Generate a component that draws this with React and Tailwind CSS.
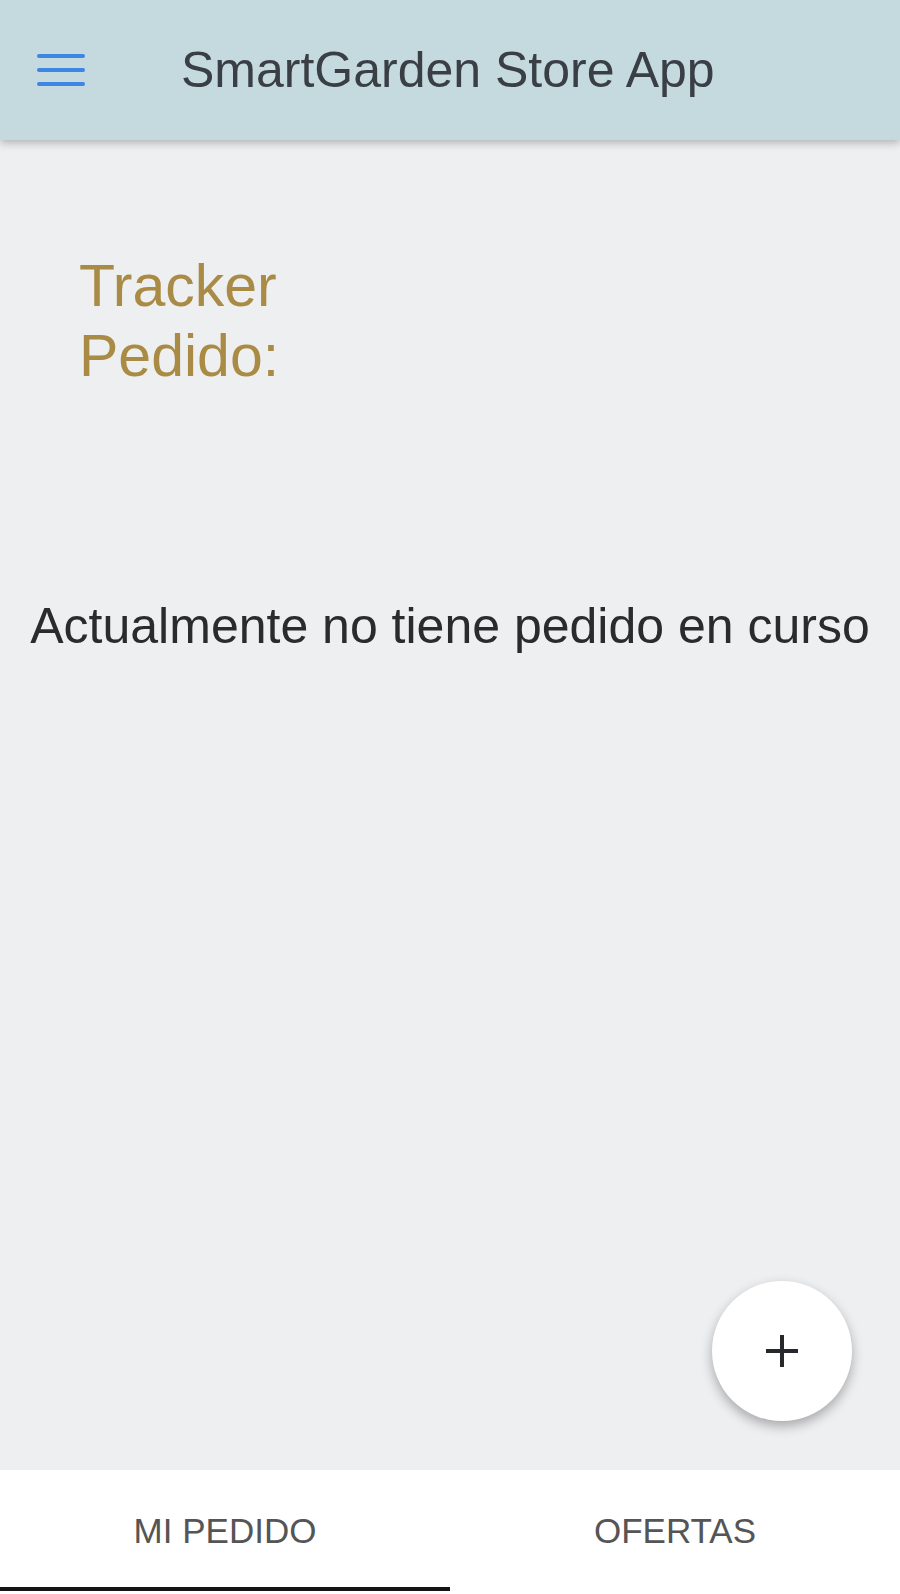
export default function App() {
  return (
    <div className="flex flex-col h-[1594px] w-full bg-[#eeeff1] font-['Liberation_Sans',Arial,sans-serif] overflow-hidden">
      <header className="relative z-10 h-[140px] shrink-0 flex items-center bg-[#c4dadf] shadow-[0_3px_8px_rgba(0,0,0,0.25)]">
        <button className="ml-[37px] w-[48px] h-[32px] flex flex-col justify-between">
          <span className="block h-[4px] w-full bg-[#3d86e4] rounded-sm" />
          <span className="block h-[4px] w-full bg-[#3d86e4] rounded-sm" />
          <span className="block h-[4px] w-full bg-[#3d86e4] rounded-sm" />
        </button>
        <h1 className="ml-[96px] text-[50px] leading-none text-[#3a3f45]">SmartGarden Store App</h1>
      </header>

      <main className="relative flex-1 flex flex-col">
        <h2 className="mt-[111px] ml-[79px] text-[59px] leading-[70px] text-[#a98b45]">
          Tracker
          <br />
          Pedido:
        </h2>
        <p className="mt-[205px] text-center text-[50px] leading-[60px] text-[#2b2b2b]">
          Actualmente no tiene pedido en curso
        </p>

        <button className="absolute right-[48px] bottom-[49px] w-[140px] h-[140px] rounded-full bg-white flex items-center justify-center shadow-[0_5px_12px_rgba(0,0,0,0.3)]">
          <svg width="36" height="36" viewBox="0 0 36 36">
            <path d="M18 2v32M2 18h32" stroke="#26282b" strokeWidth="4" />
          </svg>
        </button>
      </main>

      <nav className="h-[124px] shrink-0 flex bg-white">
        <div className="flex-1 flex flex-col">
          <span className="flex-1 flex items-center justify-center pt-[5px] text-[35px] text-[#555]">MI PEDIDO</span>
          <span className="block h-[4px] mb-[3px] bg-[#141414]" />
        </div>
        <div className="flex-1 flex flex-col">
          <span className="flex-1 flex items-center justify-center pt-[5px] text-[35px] text-[#555]">OFERTAS</span>
          <span className="block h-[4px] mb-[3px]" />
        </div>
      </nav>
    </div>
  );
}
